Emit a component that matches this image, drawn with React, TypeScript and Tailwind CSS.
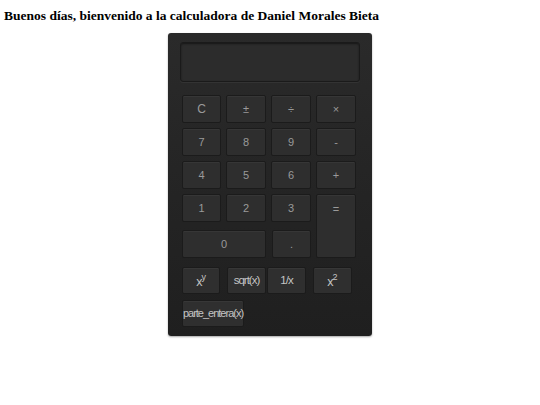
import React from "react";

const key =
  "flex items-center justify-center rounded-[2px] bg-[#2e2e2e] border border-[#1b1b1b] shadow-[inset_0_1px_0_#363636] text-[11px] text-[#9a9a9a]";
const sci =
  "flex items-center justify-center rounded-[2px] bg-[#2f2f2f] border border-[#1b1b1b] shadow-[inset_0_1px_0_#373737] h-[27px] text-[11.5px] tracking-[-1px] text-[#c4c4c4]";

export default function App() {
  return (
    <div className="w-[540px] h-[405px] bg-white" style={{ fontFamily: '"Liberation Sans", Arial, sans-serif' }}>
      <h1
        className="pl-[4px] pt-[8px] text-[13.5px] font-bold text-black leading-[16px]"
        style={{ fontFamily: '"Liberation Serif", "Times New Roman", serif' }}
      >
        Buenos días, bienvenido a la calculadora de Daniel Morales Bieta
      </h1>
      <div className="mx-auto mt-[9px] w-[204px] rounded-[3px] bg-gradient-to-b from-[#2a2a2a] to-[#1f1f1f] shadow-[0_1px_2px_rgba(0,0,0,0.35)] pt-[9px] pb-[9px]">
        <div className="ml-[12px] w-[180px] h-[40px] rounded-[3px] bg-[#2c2c2c] border border-[#1a1a1a] shadow-[inset_0_1px_2px_rgba(0,0,0,0.5),0_1px_0_#333]" />
        <div className="ml-[14px] mt-[13px] grid grid-cols-[39px_40px_40px_40px] grid-rows-[28px_28px_28px_28px_31px] gap-x-[5px] gap-y-[5px]">
          <div className={key + " text-[12px]"}>C</div>
          <div className={key}>±</div>
          <div className={key}>÷</div>
          <div className={key}>×</div>
          <div className={key}>7</div>
          <div className={key}>8</div>
          <div className={key}>9</div>
          <div className={key}>-</div>
          <div className={key}>4</div>
          <div className={key}>5</div>
          <div className={key}>6</div>
          <div className={key}>+</div>
          <div className={key}>1</div>
          <div className={key}>2</div>
          <div className={key}>3</div>
          <div className={key.replace("items-center", "items-start") + " row-span-2 pt-[6px]"}>=</div>
          <div className={key + " col-span-2 self-end h-[28px]"}>0</div>
          <div className={key + " self-end h-[28px] ml-[1px]"}>.</div>
        </div>
        <div className="ml-[14px] mt-[9px] flex">
          <div className={sci + " w-[38px] pt-[3px] text-[12.5px]"}>
            x<sup className="text-[9px] tracking-normal -top-[5px]">y</sup>
          </div>
          <div className={sci + " w-[39px] ml-[7px]"}>sqrt(x)</div>
          <div className={sci + " w-[39px] ml-[1px]"}>1/x</div>
          <div className={sci + " w-[39px] ml-[7px] pt-[3px] text-[12.5px]"}>
            x<sup className="text-[9px] tracking-normal -top-[5px]">2</sup>
          </div>
        </div>
        <div className="ml-[14px] mt-[6px] flex">
          <div className={sci + " w-[62px] text-[11px] tracking-[-0.8px] whitespace-nowrap"}>parte_entera(x)</div>
        </div>
      </div>
    </div>
  );
}
